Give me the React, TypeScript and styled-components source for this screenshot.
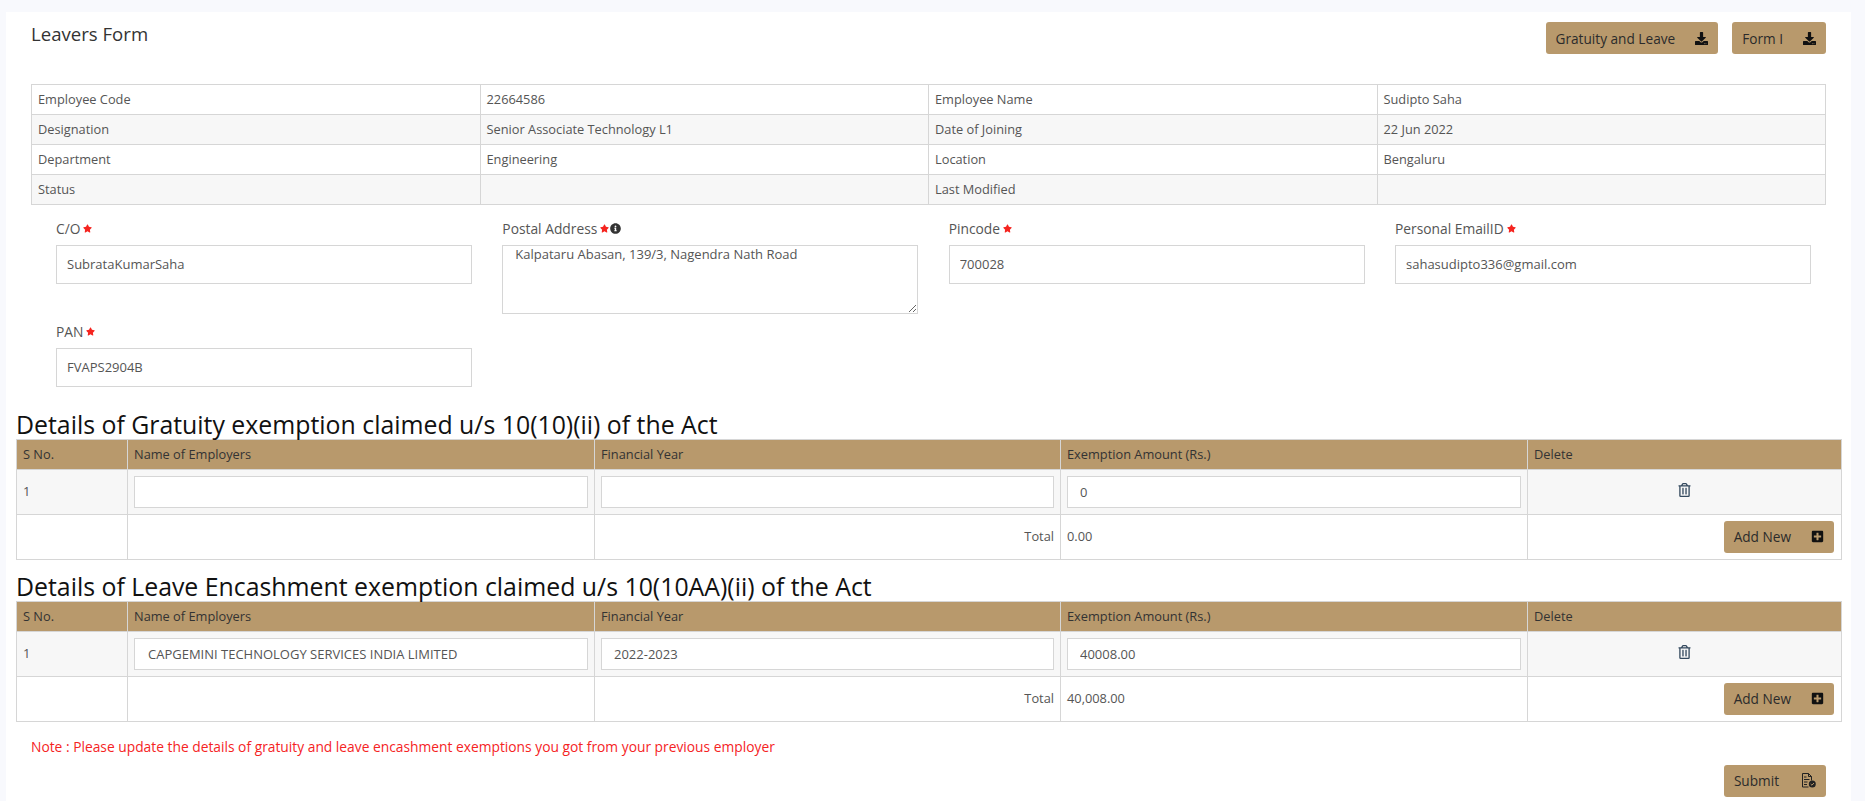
import React from 'react';
import styled, { createGlobalStyle } from 'styled-components';
import { FaDownload, FaInfoCircle, FaPlusSquare, FaRegTrashAlt, FaStar } from 'react-icons/fa';

const Global = createGlobalStyle`
  html, body { margin: 0; padding: 0; height: 801px; overflow: hidden; background: #f8f9fd; }
  body { font-family: "Open Sans", "Liberation Sans", sans-serif; font-size: 12.8px; color: #555; }
  * { box-sizing: border-box; }
`;

const Panel = styled.main`
  margin: 12px 14px 0 6px;
  height: 789px;
  background: #fff;
  overflow: hidden;
`;
const Header = styled.header`
  display: flex;
  justify-content: space-between;
  align-items: flex-start;
  height: 72px;
  padding: 10px 25px 0;
`;
const Title = styled.h1`
  margin: 0;
  font-size: 18.6px;
  line-height: 24px;
  font-weight: 400;
  color: #333;
`;
const Actions = styled.div`
  display: flex;
  gap: 14px;
`;
const Button = styled.button<{ $gap?: number }>`
  display: inline-flex;
  align-items: center;
  justify-content: space-between;
  gap: ${p => p.$gap ?? 20}px;
  height: 32px;
  padding: 0 10px;
  border: 0;
  border-radius: 3px;
  background: #b8996c;
  color: #2b2b2b;
  font: 400 13.65px "Open Sans", sans-serif;
  white-space: nowrap;
  svg { flex: none; color: #111; }
`;
const InfoTable = styled.table`
  width: 1795px;
  margin-left: 25px;
  border-collapse: collapse;
  table-layout: fixed;
  td {
    height: 30px;
    padding: 0 6px 2px;
    border: 1px solid #d6d6d6;
    font-size: 12.8px;
  }
  tr:nth-child(even) td { background: #f7f7f7; }
`;
const FormGrid = styled.section`
  display: grid;
  grid-template-columns: repeat(4, 416px);
  column-gap: 30.33px;
  row-gap: 10px;
  align-items: start;
  margin: 15.5px 0 22px 50px;
`;
const Field = styled.div`
  display: flex;
  flex-direction: column;
`;
const Label = styled.label`
  display: flex;
  align-items: center;
  height: 24px;
  padding-bottom: 8px;
  font-size: 13.8px;
  color: #555;
`;
const Star = styled(FaStar)`
  width: 9px;
  height: 9px;
  margin-left: 3px;
  color: #f5241f;
`;
const Info = styled(FaInfoCircle)`
  width: 11px;
  height: 11px;
  margin-left: 1px;
  color: #333;
`;
const TextInput = styled.input<{ $h?: number; $pad?: number }>`
  width: 100%;
  height: ${p => p.$h ?? 39}px;
  padding: 0 ${p => p.$pad ?? 10}px;
  border: 1px solid #d6d6d6;
  background: #fff;
  color: #555;
  font: 400 13px "Open Sans", sans-serif;
  outline: none;
`;
const TextArea = styled.textarea`
  display: block;
  width: 100%;
  height: 69px;
  padding: 0 12px;
  border: 1px solid #d6d6d6;
  background: #fff;
  color: #555;
  font: 400 13px/16px "Open Sans", sans-serif;
  outline: none;
`;
const SectionTitle = styled.h2`
  margin: 11px 0 0 10px;
  font-size: 24.85px;
  line-height: 30px;
  font-weight: 400;
  color: #111;
`;
const DataTable = styled.table`
  width: 1825px;
  margin-left: 10px;
  border-collapse: collapse;
  table-layout: fixed;
  th, td {
    padding: 0 6px;
    border: 1px solid #d6d6d6;
    font-size: 12.8px;
    font-weight: 400;
    text-align: left;
  }
  th { height: 30px; background: #b8996c; color: #333; }
  tbody tr:first-child td { height: 45px; background: #f7f7f7; }
  tbody tr:last-child td { height: 45px; background: #fff; }
`;
const Col = styled.col<{ $w: number }>`
  width: ${p => p.$w}px;
`;
const TextCell = styled.td`
  && { padding-bottom: 2px; }
`;
const TotalLabel = styled(TextCell)`
  && { text-align: right; padding-right: 6px; }
`;
const DeleteCell = styled.td`
  && { text-align: center; padding-bottom: 6px; }
  svg { display: inline-block; vertical-align: middle; width: 13px; height: 14px; color: #34495e; }
`;
const AddCell = styled.td`
  && { text-align: right; padding-right: 7px; }
`;
const Note = styled.p`
  margin: 15px 0 0 25px;
  font-size: 13.8px;
  line-height: 19px;
  font-weight: 400;
  color: #f5241f;
`;
const Footer = styled.footer`
  display: flex;
  justify-content: flex-end;
  margin-top: 9px;
  padding-right: 25px;
`;

const Req = () => <Star />;

const SubmitIcon = () => (
  <svg width="14" height="15" viewBox="0 0 14 15" fill="none" stroke="#222" strokeWidth="1">
    <path d="M.5 .5h6l3 3v4M.5 .5v13.500h6M6.500 .5v3h3" />
    <path d="M2 4h2.500M2 6.500h5.500M2 9h3.500M2 11.500h3" />
    <circle cx="10.300" cy="11" r="3.500" fill="#222" stroke="none" />
    <path d="M8.700 11l1.200 1.200 2.100-2.200" stroke="#b8996c" />
  </svg>
);

const columnWidths = [111, 467, 466, 467, 314];
const columnNames = ['S No.', 'Name of Employers', 'Financial Year', 'Exemption Amount (Rs.)', 'Delete'];

type RowData = { employer: string; year: string; amount: string; total: string };

const Exemption = ({ title, row }: { title: string; row: RowData }) => (
  <>
    <SectionTitle>{title}</SectionTitle>
    <DataTable>
      <colgroup>
        {columnWidths.map((w, i) => <Col key={i} $w={w} />)}
      </colgroup>
      <thead>
        <tr>{columnNames.map(n => <th key={n}>{n}</th>)}</tr>
      </thead>
      <tbody>
        <tr>
          <TextCell>1</TextCell>
          <td><TextInput $h={32} $pad={13} readOnly value={row.employer} /></td>
          <td><TextInput $h={32} $pad={12} readOnly value={row.year} /></td>
          <td><TextInput $h={32} $pad={12} readOnly value={row.amount} /></td>
          <DeleteCell><FaRegTrashAlt /></DeleteCell>
        </tr>
        <tr>
          <td />
          <td />
          <TotalLabel>Total</TotalLabel>
          <TextCell>{row.total}</TextCell>
          <AddCell>
            <Button>Add New<FaPlusSquare size={13} /></Button>
          </AddCell>
        </tr>
      </tbody>
    </DataTable>
  </>
);

const info = [
  ['Employee Code', '22664586', 'Employee Name', 'Sudipto Saha'],
  ['Designation', 'Senior Associate Technology L1', 'Date of Joining', '22 Jun 2022'],
  ['Department', 'Engineering', 'Location', 'Bengaluru'],
  ['Status', '', 'Last Modified', ''],
];

export default function App() {
  return (
    <>
      <Global />
      <Panel>
        <Header>
          <Title>Leavers Form</Title>
          <Actions>
            <Button>Gratuity and Leave<FaDownload size={13} /></Button>
            <Button>Form I<FaDownload size={13} /></Button>
          </Actions>
        </Header>
        <InfoTable>
          <tbody>
            {info.map(r => (
              <tr key={r[0]}>{r.map((c, i) => <td key={i}>{c}</td>)}</tr>
            ))}
          </tbody>
        </InfoTable>
        <FormGrid>
          <Field>
            <Label>C/O<Req /></Label>
            <TextInput readOnly value="SubrataKumarSaha" />
          </Field>
          <Field>
            <Label>Postal Address<Req /><Info /></Label>
            <TextArea readOnly value="Kalpataru Abasan, 139/3, Nagendra Nath Road" />
          </Field>
          <Field>
            <Label>Pincode<Req /></Label>
            <TextInput readOnly value="700028" />
          </Field>
          <Field>
            <Label>Personal EmailID<Req /></Label>
            <TextInput readOnly value="sahasudipto336@gmail.com" />
          </Field>
          <Field>
            <Label>PAN<Req /></Label>
            <TextInput readOnly value="FVAPS2904B" />
          </Field>
        </FormGrid>
        <Exemption
          title="Details of Gratuity exemption claimed u/s 10(10)(ii) of the Act"
          row={{ employer: '', year: '', amount: '0', total: '0.00' }}
        />
        <Exemption
          title="Details of Leave Encashment exemption claimed u/s 10(10AA)(ii) of the Act"
          row={{ employer: 'CAPGEMINI TECHNOLOGY SERVICES INDIA LIMITED', year: '2022-2023', amount: '40008.00', total: '40,008.00' }}
        />
        <Note>Note : Please update the details of gratuity and leave encashment exemptions you got from your previous employer</Note>
        <Footer>
          <Button $gap={23}>Submit<SubmitIcon /></Button>
        </Footer>
      </Panel>
    </>
  );
}
